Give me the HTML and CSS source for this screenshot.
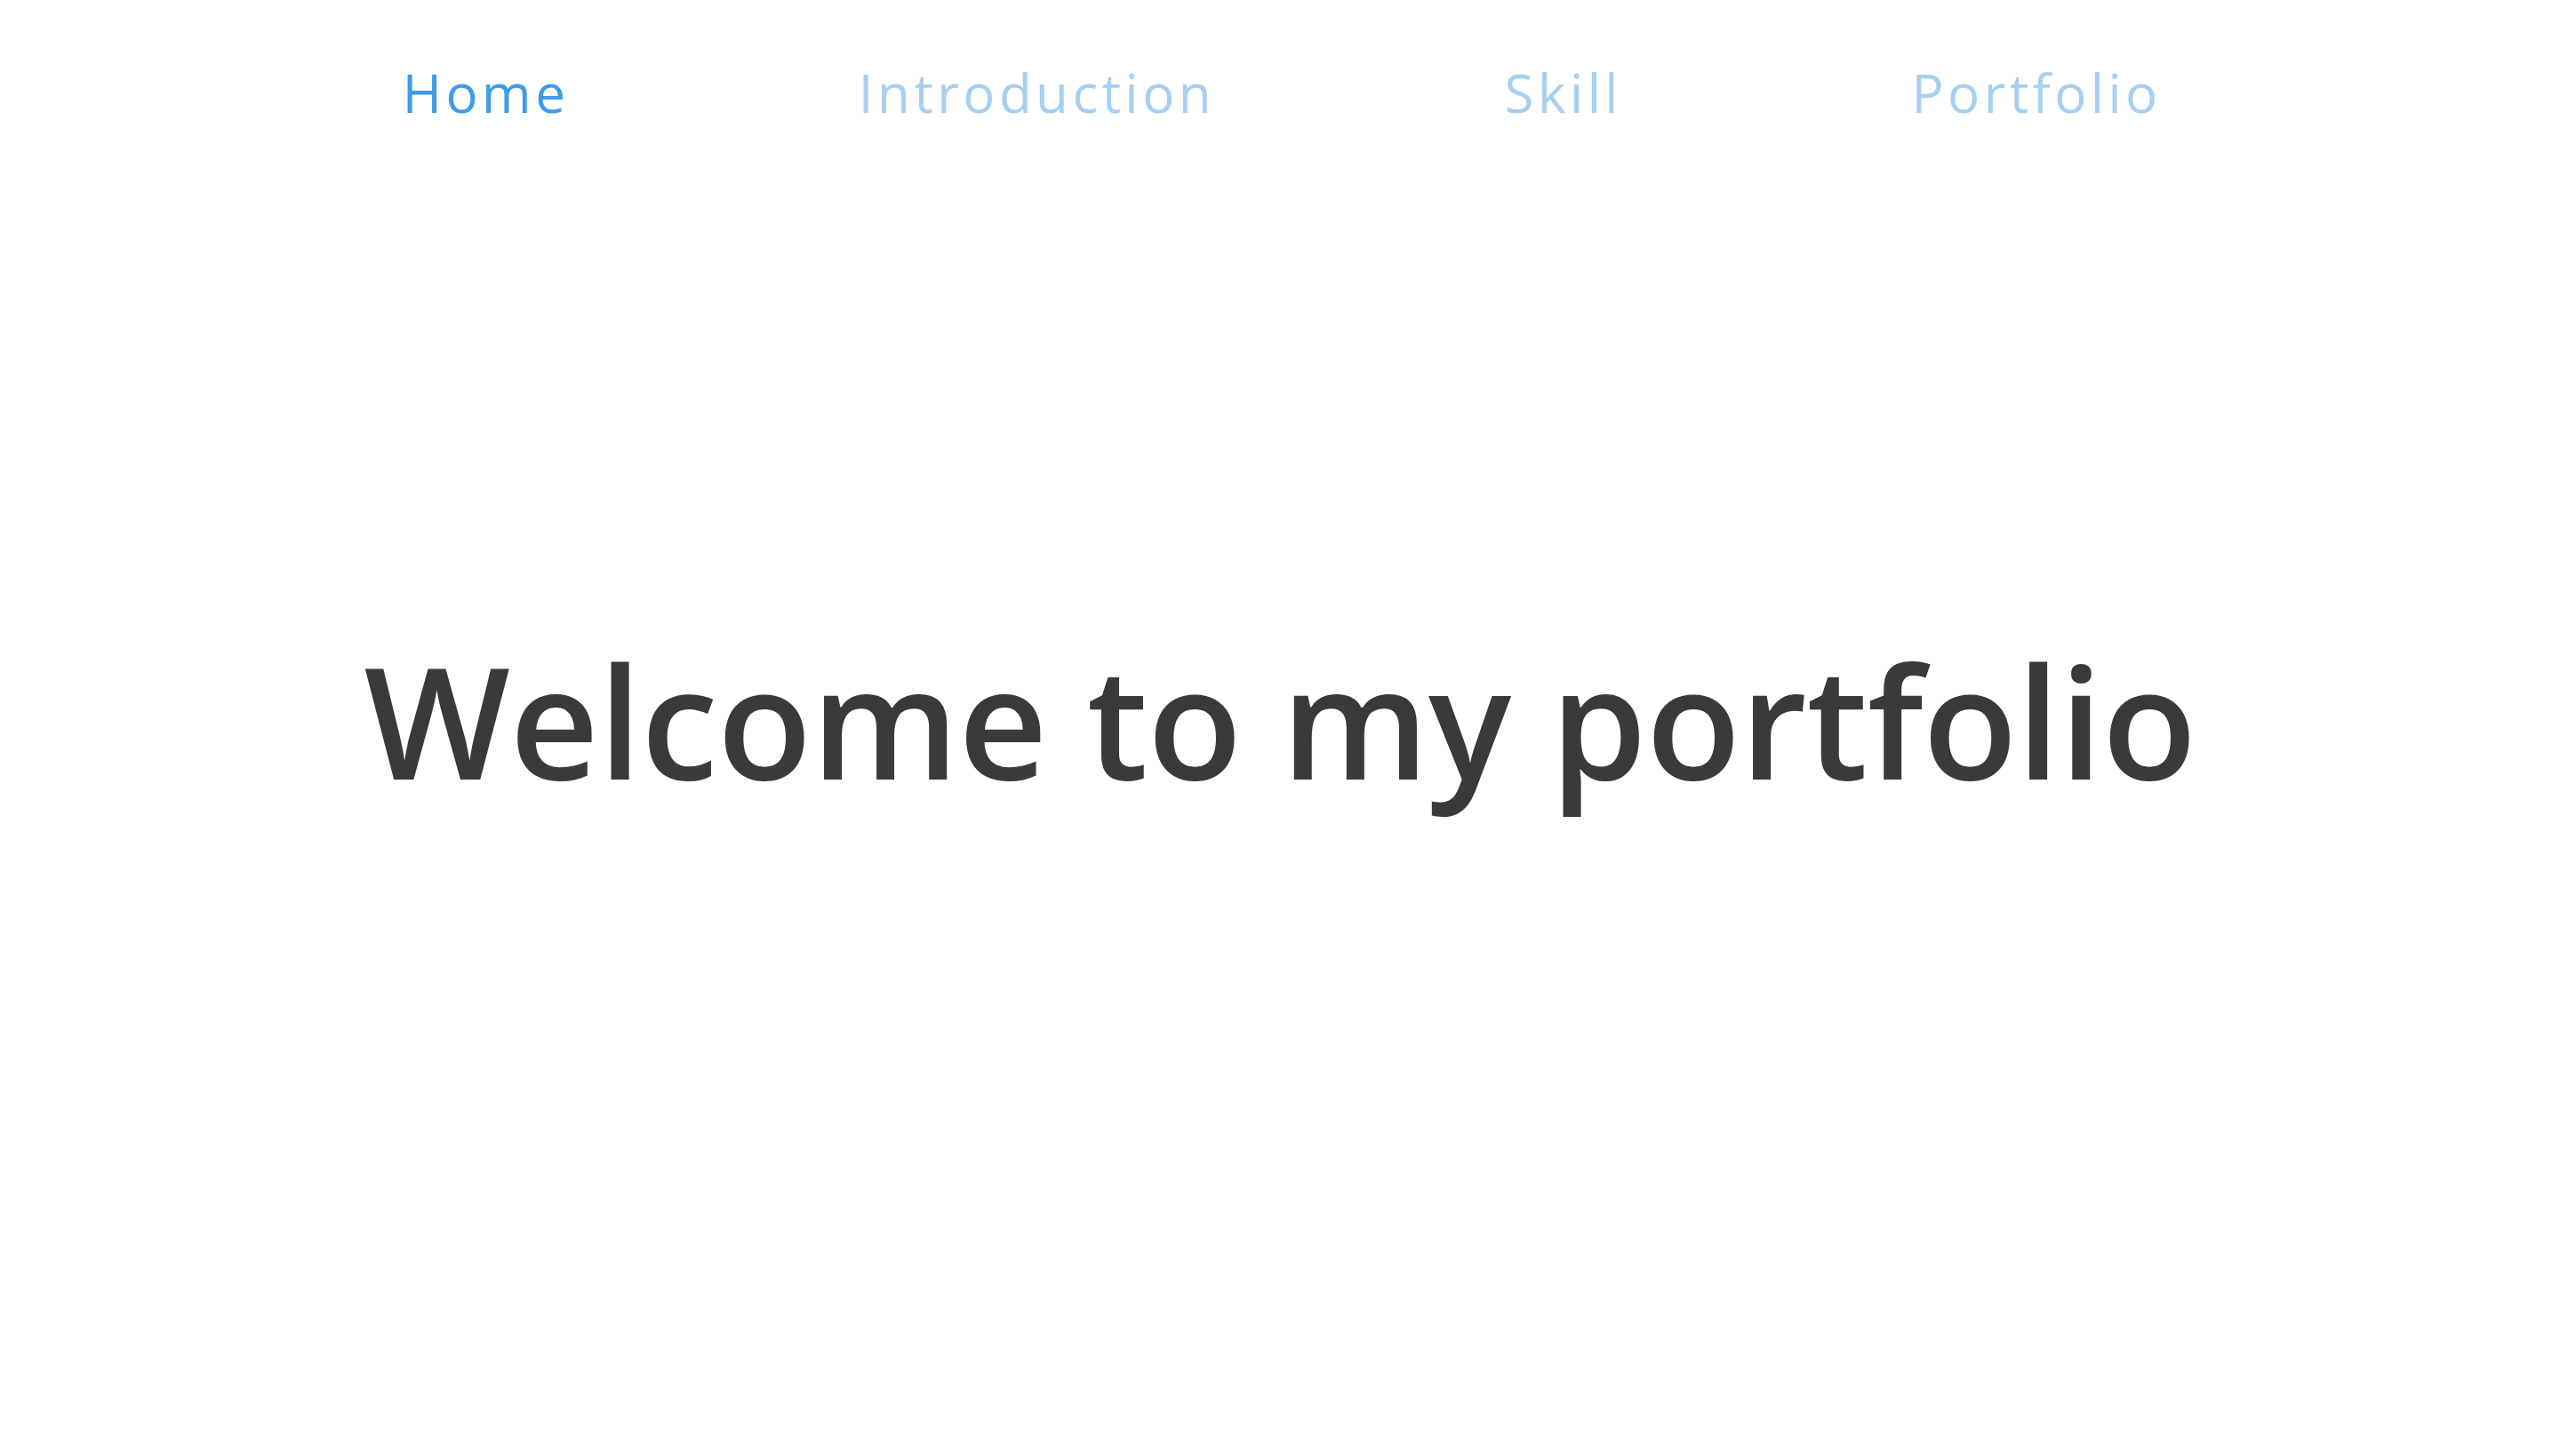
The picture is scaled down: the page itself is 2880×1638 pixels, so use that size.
FILE: index.html
```html
<!DOCTYPE html>
<html lang="en">
<head>
<meta charset="utf-8">
<title>Portfolio</title>
<link rel="stylesheet" href="styles.css">
</head>
<body>
<div class="page">
  <nav class="nav">
    <a class="nav-link active" href="#home">Home</a>
    <a class="nav-link" href="#intro">Introduction</a>
    <a class="nav-link" href="#skill">Skill</a>
    <a class="nav-link" href="#portfolio">Portfolio</a>
  </nav>
  <main class="hero">
    <h1 class="hero-title">Welcome to my portfolio</h1>
  </main>
  <div class="spacer"></div>
</div>
</body>
</html>
```
FILE: styles.css
```css
html, body {
  margin: 0;
  padding: 0;
  background: #ffffff;
}
body {
  font-family: "Open Sans", "Noto Sans", sans-serif;
}
.page {
  display: grid;
  grid-template-rows: 208px 1fr 226px;
  height: 100vh;
}
.nav {
  display: flex;
  justify-content: center;
  align-items: center;
  gap: 330px;
}
.nav-link {
  font-size: 60px;
  font-weight: 400;
  letter-spacing: 4.5px;
  margin-right: -4.5px;
  color: #a6cff1;
  text-decoration: none;
  line-height: 1;
}
.nav-link.active {
  color: #3d9bea;
}
.hero {
  display: flex;
  justify-content: center;
  align-items: center;
}
.hero-title {
  margin: 0;
  font-size: 174px;
  font-weight: 600;
  color: #3a3a3a;
  letter-spacing: -0.5px;
  line-height: 1;
}
```
